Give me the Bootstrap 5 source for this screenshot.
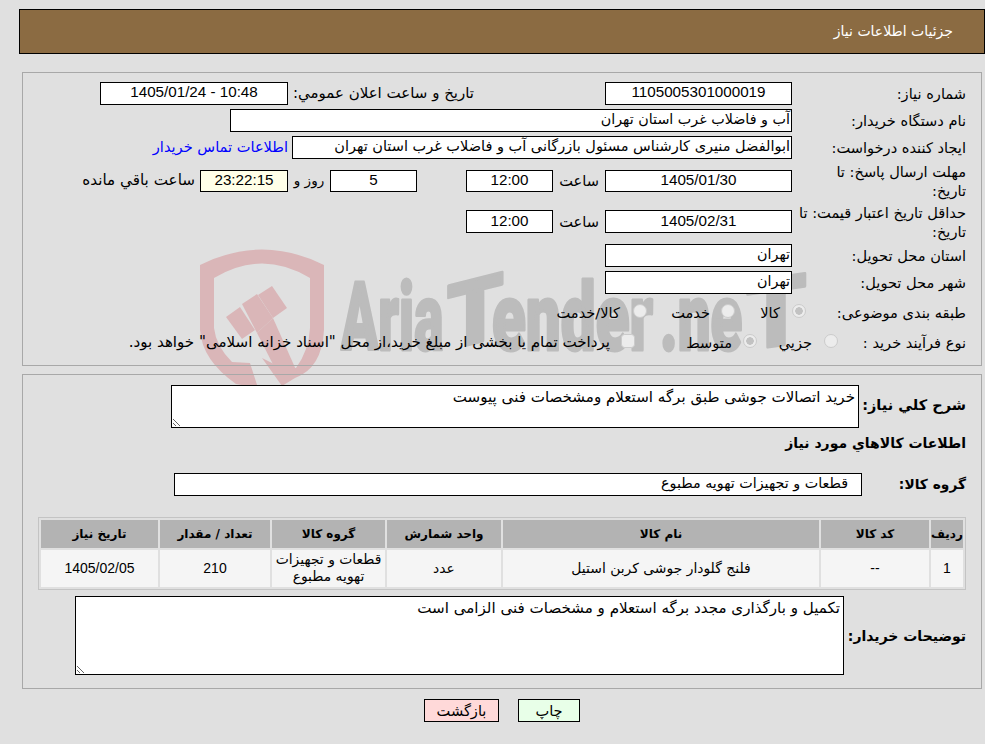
<!DOCTYPE html>
<html lang="fa" dir="rtl">
<head>
<meta charset="utf-8">
<title>جزئیات اطلاعات نیاز</title>
<link href="https://cdn.jsdelivr.net/npm/bootstrap@5.3.0/dist/css/bootstrap.min.css" rel="stylesheet">
<style>
body{background:#e0e0e0;font-family:"DejaVu Sans",sans-serif;font-size:14.6px;color:#000;margin:0;height:744px;overflow:hidden;position:relative}
.wm{position:absolute;left:190px;top:240px;z-index:0;direction:ltr}
.wm text{font-family:Roboto,sans-serif;font-weight:900;fill:#bcbcbc;stroke:#bcbcbc;stroke-width:3px;stroke-linejoin:round;direction:ltr;unicode-bidi:bidi-override}
.page{position:relative;z-index:1;padding:9px 0 0 19px}
.headbar{height:44.5px;background:#8b6b42;border:1px solid #000;color:#fff;padding:0 31px;font-size:14px;display:flex;align-items:center}
.panel{margin:18.5px 3px 0 2.5px;border:1.5px solid #a8a8a8;padding:8.5px 15px 0 0;height:294px}
.panel2{margin-top:8px;height:315px;padding-top:9.5px}
.frow{display:flex;align-items:center;margin-bottom:4px;min-height:23px}
.lab{width:174px;flex:none;line-height:19.5px;white-space:nowrap;padding-top:1px}
.fld{height:23px;border:1px solid #000;background:#fff;display:flex;align-items:center;justify-content:center;flex:none;white-space:nowrap;overflow:hidden;padding-bottom:1px;font-size:14.3px}
.fld.rt{justify-content:flex-start;padding:0 1px 1px}
.w187{width:187px}.w88{width:88px}.w87{width:87px}
.fld.num{font-family:"Liberation Sans",sans-serif;font-size:15.2px}
.note{background:#ffffe8}
.tall{height:40px;margin:0}
.tall-a{margin-top:-2px;margin-bottom:1px}
.tall-b{margin-bottom:2px}
.tall-a .fld{height:22px}
.opt{height:30px;margin:0}
.pick{width:14px;height:14px;margin:0;flex:none;background-color:#ececec;border:1px solid #cbcbcb;opacity:1!important;position:relative;top:-2px}
.pick:checked,.pick:checked[type=radio]{background-color:#ececec;border-color:#cbcbcb;background-image:radial-gradient(circle,#c2c2c2 0 3.5px,transparent 4px)}
.blabel{font-weight:700;font-size:14.5px;flex:none;white-space:nowrap}
.area{display:block;flex:none;border:1px solid #000;background:#fff;font-family:"DejaVu Sans",sans-serif;font-size:15.1px;line-height:17px;padding:3px 3px;margin:0;resize:both;border-radius:0;outline:0;color:#000}
.tb{width:928px;margin:0 0 6px 0;border:1px solid #c4c4c4;border-collapse:separate;border-spacing:2px;table-layout:fixed;text-align:center;font-size:13.9px}
.tb th{background:#b3b3b3;height:28px;padding:0;font-weight:700;font-size:12px}
.tb td{background:#f5f5f5;height:37px;padding:0;line-height:17px}
.tb td.dgt{font-family:"Liberation Sans",sans-serif;font-size:14px}
.actions{margin-top:10px;gap:19px;justify-content:center}
.act,.act:hover{height:23px;border:1px solid #000;color:#000;font-size:14.6px;padding:0;border-radius:0;line-height:20px}
.act-g,.act-g:hover{width:62px;background:#e8ffe8}
.act-r,.act-r:hover{width:75px;background:#ffd9d9}
a.tel{color:#00f;text-decoration:none}
.lab-pub{width:181px;margin-right:131px;margin-left:5px;font-size:15px}
.w188{width:188px}
.hr-lab{width:52px;text-align:center;flex:none}
.day-box{margin-right:49px}
.day-lab{width:42px;flex:none;text-align:center;font-size:13.5px}
.rem{margin-right:5px;font-size:15.2px;white-space:nowrap}
.lab-a{width:160px}.lab-b{width:128px}
.o1{width:45px;margin-right:12px}.o2{width:63px;margin-right:11px}.o3{margin-right:13px}
.o4{width:55px;margin-right:12px}.o5{width:97px;margin-right:11px}.o6{margin-right:11px;white-space:nowrap;font-size:15.1px}
.w-a{width:107px}.ta1{width:688px;height:43px}
.info-t{height:22px;line-height:22px;margin-bottom:19px;font-size:14px}
.grp{margin-bottom:21px}.w-g{width:104px;font-size:13.8px;padding-top:1px}.grp-f{width:688px;padding-right:13px!important}
.w-t{width:122px;font-size:14px;padding-top:3px}.ta2{width:769px;height:79px}
</style>
</head>
<body>
<svg class="wm" width="620" height="170" viewBox="190 240 620 170" aria-hidden="true">
<path fill-rule="evenodd" fill="#dab6b8" d="M200 265Q262 234 324 265V330Q322 368 295 378L282 386L262 358L250 363L258 388L236 384Q202 360 200 330ZM214 278V328Q216 346 232 362L250 363L262 358L282 368L296 368Q309 350 310 328V278Q262 249 214 278Z"/>
<g fill="#dab6b8"><path d="M226 317L240 307L255 330L242 339Z"/><path d="M242 304L257 294L273 318L257 333Z"/><path d="M258 295L272 286L287 308L273 318Z"/><path d="M257 333L273 318L297 372L282 382Z"/></g>
<text transform="translate(341 350) scale(.583 1)" font-size="94">Aria</text>
<text transform="translate(447 350) skewY(-14)" font-size="90">T</text>
<text transform="translate(492 350) scale(.66 1)" font-size="94">ender</text>
<text transform="translate(660 350) scale(.62 1)" font-size="94">.ne</text>
<text transform="translate(746 350) skewY(-8)" font-size="96">T</text>
</svg>
<div class="page">
<div class="headbar">جزئیات اطلاعات نیاز</div>
<div class="panel">
 <div class="frow"><div class="lab">شماره نیاز:</div><div class="fld w187 num">1105005301000019</div><div class="lab lab-pub">تاریخ و ساعت اعلان عمومي:</div><div class="fld w188 num">10:48 - 1405/01/24</div></div>
 <div class="frow"><div class="lab">نام دستگاه خریدار:</div><div class="fld rt" style="width:562px">آب و فاضلاب غرب استان تهران</div></div>
 <div class="frow"><div class="lab">ایجاد کننده درخواست:</div><div class="fld rt" style="width:500px;font-size:14.5px">ابوالفضل منیری کارشناس مسئول بازرگانی آب و فاضلاب غرب استان تهران</div><a class="tel me-1" href="#">اطلاعات تماس خریدار</a></div>
 <div class="frow tall tall-a"><div class="lab">مهلت ارسال پاسخ: تا<br>تاریخ:</div><div class="fld w187 num">1405/01/30</div><div class="hr-lab">ساعت</div><div class="fld w87 num">12:00</div><div class="fld w87 num day-box">5</div><div class="day-lab">روز و</div><div class="fld w88 num note">23:22:15</div><div class="rem">ساعت باقي مانده</div></div>
 <div class="frow tall tall-b"><div class="lab">حداقل تاریخ اعتبار قیمت: تا<br>تاریخ:</div><div class="fld w187 num">1405/02/31</div><div class="hr-lab">ساعت</div><div class="fld w87 num">12:00</div></div>
 <div class="frow"><div class="lab">استان محل تحویل:</div><div class="fld rt w187">تهران</div></div>
 <div class="frow"><div class="lab">شهر محل تحویل:</div><div class="fld rt w187">تهران</div></div>
 <div class="frow opt"><div class="lab lab-a">طبقه بندی موضوعی:</div><input class="form-check-input pick" type="radio" name="k" checked disabled><span class="o1">کالا</span><input class="form-check-input pick" type="radio" name="k" disabled><span class="o2">خدمت</span><input class="form-check-input pick" type="radio" name="k" disabled><span class="o3">کالا/خدمت</span></div>
 <div class="frow opt"><div class="lab lab-b">نوع فرآیند خرید :</div><input class="form-check-input pick" type="radio" name="p" disabled><span class="o4">جزيي</span><input class="form-check-input pick" type="radio" name="p" checked disabled><span class="o5">متوسط</span><input class="form-check-input pick" type="checkbox" disabled><span class="o6">پرداخت تمام یا بخشی از مبلغ خرید،از محل "اسناد خزانه اسلامی" خواهد بود.</span></div>
</div>
<div class="panel panel2">
 <div class="frow"><div class="blabel w-a">شرح کلي نیاز:</div><textarea class="area ta1" readonly>خرید اتصالات جوشی طبق برگه استعلام ومشخصات فنی پیوست</textarea></div>
 <div class="blabel info-t">اطلاعات کالاهاي مورد نیاز</div>
 <div class="frow grp"><div class="blabel w-g">گروه کالا:</div><div class="fld rt grp-f">قطعات و تجهیزات تهویه مطبوع</div></div>
 <table class="tb">
  <colgroup><col style="width:32px"><col style="width:108px"><col style="width:316px"><col style="width:114px"><col style="width:113px"><col style="width:110px"><col style="width:117px"></colgroup>
  <thead><tr><th>ردیف</th><th>کد کالا</th><th>نام کالا</th><th>واحد شمارش</th><th>گروه کالا</th><th>تعداد / مقدار</th><th>تاریخ نیاز</th></tr></thead>
  <tbody><tr><td class="dgt">1</td><td class="dgt">--</td><td>فلنج گلودار جوشی کربن استیل</td><td>عدد</td><td>قطعات و تجهیزات تهویه مطبوع</td><td class="dgt">210</td><td class="dgt">1405/02/05</td></tr></tbody>
 </table>
 <div class="frow"><div class="blabel w-t">توضیحات خریدار:</div><textarea class="area ta2" readonly>تکمیل و بارگذاری مجدد برگه استعلام و مشخصات فنی الزامی است</textarea></div>
</div>
<div class="d-flex actions"><button type="button" class="btn act act-g">چاپ</button><button type="button" class="btn act act-r">بازگشت</button></div>
</div>
</body>
</html>
